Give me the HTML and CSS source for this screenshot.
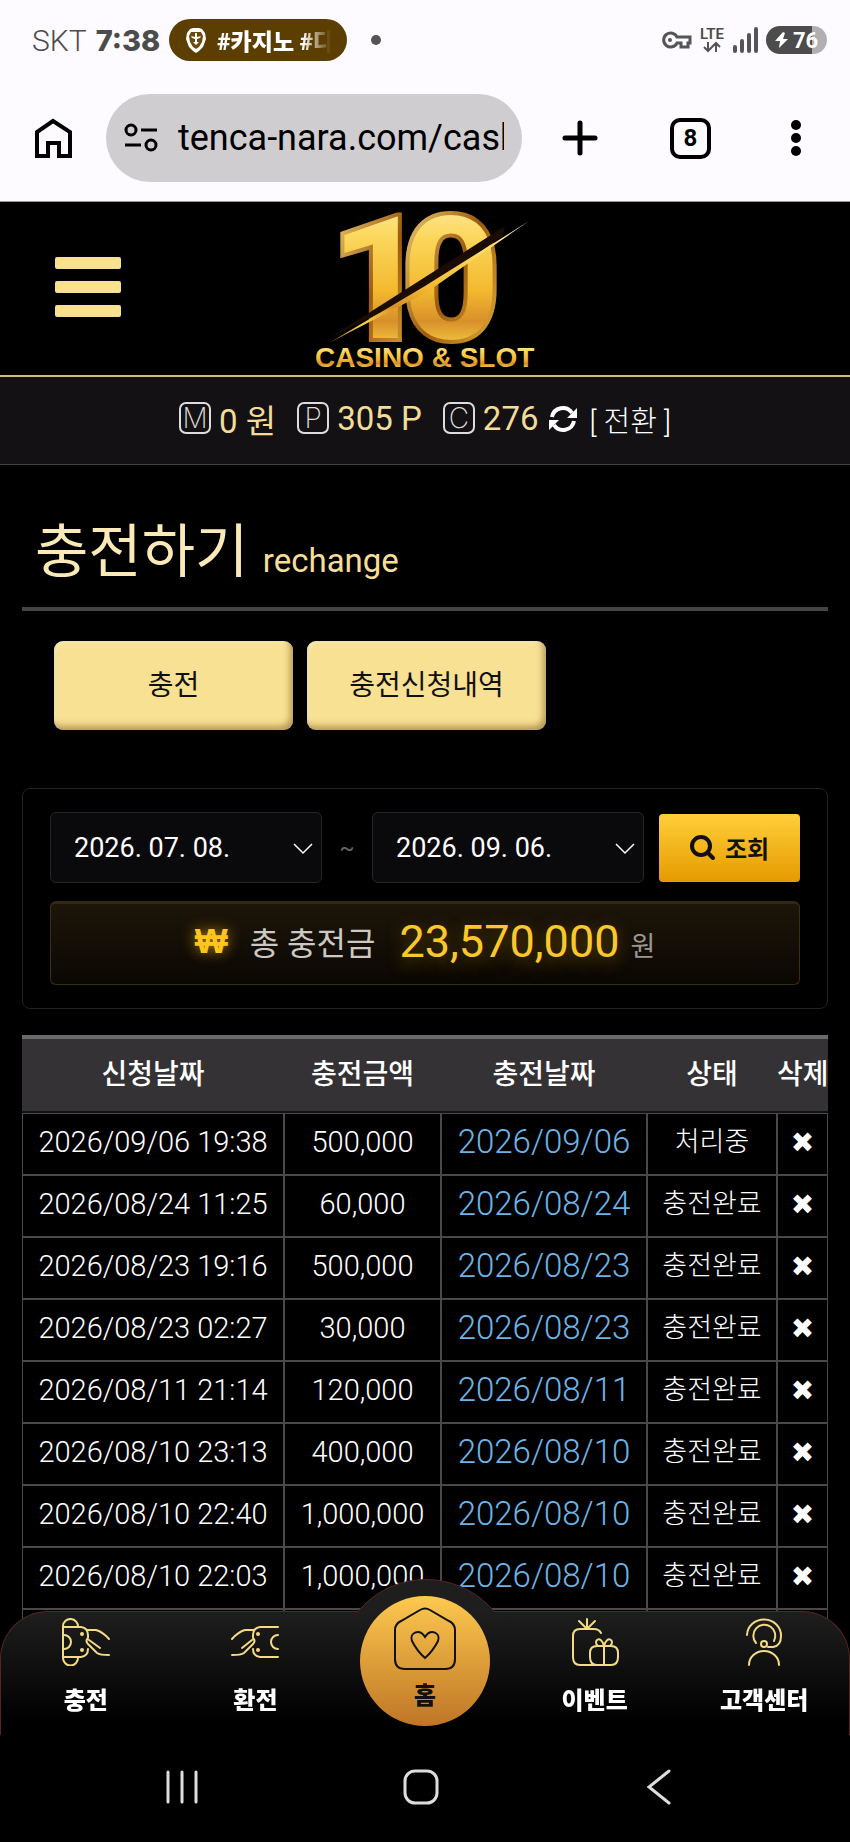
FILE: index.html
```
<!DOCTYPE html>
<html lang="ko">
<head>
    <meta charset="UTF-8">
    <meta name="viewport" content="width=device-width, initial-scale=1.0">
    <title>충전하기</title>
    <link rel="stylesheet" href="styles.css">
</head>
<body>
    <div class="browser">
        <div class="status">
            <span class="carrier">SKT</span>
            <span class="clock">7:38</span>
            <span class="chip">
                <svg width="22" height="26" viewBox="0 0 22 26">
                    <path d="M5 2 8 1h6l3 1 3 4 1 6-3 8-4 4-3 2-3-2-4-4-3-8 1-6z" fill="#fff"/>
                    <path d="M6 5h10l2 4-1 6-3 5-3 2-3-2-3-5-1-6z" fill="#6b4b0c"/>
                    <path d="M6 9l4 1v2l-3-1zM16 9l-4 1v2l3-1zM10 6h2v9h-2zM8 15h6l-3 3z" fill="#fff"/>
                </svg>
                <span class="chip-text">#카지노 #다</span>
            </span>
            <span class="dot"></span>
            <span class="signals">
                <svg width="30" height="18" viewBox="0 0 30 18" fill="none" stroke="#555" stroke-width="3">
                    <path d="M15 6A7 7 0 1 0 15 12H19V16H26V12H28V6Z"/>
                    <circle cx="8" cy="9" r="2" fill="#555" stroke="none"/>
                </svg>
                <span class="lte">LTE
                    <svg width="20" height="12" viewBox="0 0 20 12" fill="none" stroke="#555" stroke-width="2">
                        <path d="M6 1v9M2 6l4 4 4-4M14 11V2M10 6l4-4 4 4"/>
                    </svg>
                </span>
                <svg width="26" height="28" viewBox="0 0 26 28" stroke="#555" stroke-linecap="round">
                    <path d="M3 21v4M10 15v10M17 9v16M24 3v22" stroke-width="4"/>
                </svg>
                <span class="battery">
                    <svg width="13" height="16" viewBox="0 0 13 16"><path d="M8 0 0 9h5l-1 7 9-9H8l2-6z" fill="#fff"/></svg>
                    76
                </span>
            </span>
        </div>
        <div class="toolbar">
            <button class="tool" aria-label="홈">
                <svg width="41" height="42" viewBox="0 0 41 42" fill="none" stroke="#000" stroke-width="4">
                    <path d="M4 39V15L20 4 37 15V39H26V26H15V39Z"/>
                </svg>
            </button>
            <div class="address">
                <svg width="34" height="30" viewBox="0 0 34 30" fill="none" stroke="#000" stroke-width="3">
                    <circle cx="7" cy="7" r="5"/><path d="M17 7h16M1 22h16"/><circle cx="27" cy="22" r="5"/>
                </svg>
                <input type="text" class="url" aria-label="주소" value="tenca-nara.com/cash">
            </div>
            <button class="tool plus" aria-label="새 탭">
                <svg width="40" height="40" viewBox="0 0 40 40" stroke="#000" stroke-width="5" stroke-linecap="round">
                    <path d="M20 5v30M5 20h30"/>
                </svg>
            </button>
            <button class="tool tabs">8</button>
            <button class="tool more" aria-label="더보기">
                <svg width="26" height="38" viewBox="0 0 26 38">
                    <circle cx="13" cy="6" r="5"/><circle cx="13" cy="19" r="5"/><circle cx="13" cy="32" r="5"/>
                </svg>
            </button>
        </div>
    </div>

    <header>
        <button class="menu" aria-label="메뉴"><span></span><span></span><span></span></button>
        <a href="#" class="logo">
            <svg width="220" height="166" viewBox="0 0 220 166">
                <defs>
                    <linearGradient id="gold" x1="0" y1="0" x2="0" y2="1">
                        <stop offset="0" stop-color="#fff6c4"/>
                        <stop offset=".3" stop-color="#fbd65a"/>
                        <stop offset=".55" stop-color="#f3b92f"/>
                        <stop offset=".7" stop-color="#d8902a"/>
                        <stop offset=".85" stop-color="#fbd648"/>
                        <stop offset="1" stop-color="#a3600f"/>
                    </linearGradient>
                    <linearGradient id="edge" x1="0" y1="0" x2="1" y2="1">
                        <stop offset="0" stop-color="#ffe98a"/>
                        <stop offset=".5" stop-color="#9c5a0c"/>
                        <stop offset="1" stop-color="#f5c445"/>
                    </linearGradient>
                </defs>
                <g class="logo-num" fill="url(#gold)" stroke="url(#edge)" stroke-width="4">
                    <text x="13" y="134">1</text>
                    <text x="85" y="134">0</text>
                </g>
                <path d="M16 131 104 75 190 20 188 30 108 86Z" fill="#1a0c00"/>
                <path d="M14 137 110 80 214 15 112 86Z" fill="url(#gold)"/>
                <text class="logo-name" x="0" y="161" fill="url(#gold)">CASINO &amp; SLOT</text>
            </svg>
        </a>
    </header>

    <div class="wallet">
        <span class="coin">M</span><b>0 원</b>
        <span class="coin">P</span><b>305 P</b>
        <span class="coin">C</span><b>276</b>
        <button class="refresh" aria-label="새로고침">
            <svg width="28" height="28" viewBox="0 0 28 28" fill="none" stroke="#fff" stroke-width="4">
                <path d="M3 12A11 11 0 0 1 23 8M25 16A11 11 0 0 1 5 20"/>
                <path d="M28 3v10H18zM0 25V15h10z" fill="#fff" stroke="none"/>
            </svg>
        </button>
        <a href="#" class="change">[ 전환 ]</a>
    </div>

    <main>
        <h1>충전하기 <small>rechange</small></h1>

        <div class="buttons">
            <button>충전</button>
            <button>충전신청내역</button>
        </div>

        <form class="search">
            <div class="dates">
                <label class="date">
                    <select aria-label="시작일"><option>2026. 07. 08.</option></select>
                    <svg width="20" height="12" viewBox="0 0 20 12" fill="none" stroke="#fff" stroke-width="1.5"><path d="M1 1l9 9 9-9"/></svg>
                </label>
                <span class="tilde">~</span>
                <label class="date">
                    <select aria-label="종료일"><option>2026. 09. 06.</option></select>
                    <svg width="20" height="12" viewBox="0 0 20 12" fill="none" stroke="#fff" stroke-width="1.5"><path d="M1 1l9 9 9-9"/></svg>
                </label>
                <button type="button" class="find">
                    <svg width="26" height="26" viewBox="0 0 26 26" fill="none" stroke="#111" stroke-width="4" stroke-linecap="round">
                        <circle cx="11" cy="11" r="9"/><path d="M18 18l5 5"/>
                    </svg>
                    조회
                </button>
            </div>
            <div class="total">
                <span class="won">₩</span>
                <span class="total-name">총 충전금</span>
                <span class="sum">23,570,000</span>
                <span class="unit">원</span>
            </div>
        </form>

        <table>
            <colgroup>
                <col class="c1"><col class="c2"><col class="c3"><col class="c4"><col class="c5">
            </colgroup>
            <thead>
                <tr><th>신청날짜</th><th>충전금액</th><th>충전날짜</th><th>상태</th><th>삭제</th></tr>
            </thead>
            <tbody>
                <tr><td>2026/09/06 19:38</td><td>500,000</td><td class="day">2026/09/06</td><td class="state">처리중</td><td><button class="del">✖</button></td></tr>
                <tr><td>2026/08/24 11:25</td><td>60,000</td><td class="day">2026/08/24</td><td class="state">충전완료</td><td><button class="del">✖</button></td></tr>
                <tr><td>2026/08/23 19:16</td><td>500,000</td><td class="day">2026/08/23</td><td class="state">충전완료</td><td><button class="del">✖</button></td></tr>
                <tr><td>2026/08/23 02:27</td><td>30,000</td><td class="day">2026/08/23</td><td class="state">충전완료</td><td><button class="del">✖</button></td></tr>
                <tr><td>2026/08/11 21:14</td><td>120,000</td><td class="day">2026/08/11</td><td class="state">충전완료</td><td><button class="del">✖</button></td></tr>
                <tr><td>2026/08/10 23:13</td><td>400,000</td><td class="day">2026/08/10</td><td class="state">충전완료</td><td><button class="del">✖</button></td></tr>
                <tr><td>2026/08/10 22:40</td><td>1,000,000</td><td class="day">2026/08/10</td><td class="state">충전완료</td><td><button class="del">✖</button></td></tr>
                <tr><td>2026/08/10 22:03</td><td>1,000,000</td><td class="day">2026/08/10</td><td class="state">충전완료</td><td><button class="del">✖</button></td></tr>
                <tr><td></td><td></td><td></td><td></td><td></td></tr>
            </tbody>
        </table>
    </main>

    <div class="bottom">
        <nav>
            <div class="dome"></div>
            <a href="#">
                <svg width="48" height="48" viewBox="0 0 48 48">
                    <path d="M1 8v32a7 7 0 0 0 15 0v-1M1 8a7 7 0 0 1 15 1M1 9h18q7 1 7 8v2M1 39h18q7-1 7-8M2 17a7 7 0 0 1 0 14"/>
                    <path d="M25 12h9q7 2 13 9M27 22l11 8M26 20q-3 3 0 6l9 9q3 2 12 2"/>
                    <circle cx="20" cy="16" r="1"/><circle cx="20" cy="32" r="1"/>
                </svg>
                충전
            </a>
            <a href="#">
                <svg width="48" height="48" viewBox="0 0 48 48">
                    <path d="M47 9H29q-7 1-7 8v2M47 39H29q-7-1-7-8M47 17a7 7 0 0 0 0 14"/>
                    <path d="M23 12h-9Q7 14 1 21M21 22l-10 8M22 20q3 3 0 6l-9 9q-3 2-12 2"/>
                    <circle cx="27" cy="16" r="1"/><circle cx="27" cy="32" r="1"/>
                </svg>
                환전
            </a>
            <a href="#" class="home">
                <svg width="64" height="64" viewBox="0 0 64 64">
                    <path d="M27 3q5-3 10 0l19 11q6 3 6 9v29q0 10-10 10H12Q2 62 2 52V23q0-6 6-9z"/>
                    <path d="M32 51Q24 44 19 34C16 26 26 21 32 30C38 21 48 26 45 34Q40 44 32 51z"/>
                </svg>
                홈
            </a>
            <a href="#">
                <svg width="48" height="48" viewBox="0 0 48 48">
                    <path d="M30 15q-2-4-7-4H9q-7 0-7 7v21q0 8 7 8h28M16 10V1M15 10 8 3M17 10l7-7"/>
                    <path d="M19 35q0-7 7-7h14q7 0 7 7v4q0 8-7 8H26q-7 0-7-8zM33 28v18M33 28h-6c-6-5 3-12 6 0c3-12 12-5 6 0z"/>
                </svg>
                이벤트
            </a>
            <a href="#">
                <svg width="48" height="48" viewBox="0 0 48 48">
                    <path d="M7 17A17 16 0 0 1 41 18Q41 28 33 29H28M16 25A11 11 0 1 1 34 23"/>
                    <circle cx="24" cy="26" r="3"/>
                    <path d="M9 47a15 14 0 0 1 30 0"/>
                </svg>
                고객센터
            </a>
        </nav>
        <div class="system">
            <button aria-label="최근 앱">
                <svg width="36" height="36" viewBox="0 0 36 36"><path d="M4 3v30M18 3v30M32 3v30"/></svg>
            </button>
            <button aria-label="홈 화면">
                <svg width="36" height="36" viewBox="0 0 36 36"><rect x="2" y="2" width="32" height="32" rx="10"/></svg>
            </button>
            <button aria-label="뒤로">
                <svg width="36" height="36" viewBox="0 0 36 36"><path d="M28 2 8 18l20 16"/></svg>
            </button>
        </div>
    </div>
</body>
</html>
```
FILE: styles.css
```
* {
    box-sizing: border-box;
}

body {
    font-family: Roboto, "Noto Sans CJK KR", sans-serif;
    margin: 0;
    background-color: #000;
    color: #fff;
    min-height: 100vh;
    overflow-x: hidden;
}

button {
    font-family: inherit;
    color: inherit;
    background: none;
    border: none;
    padding: 0;
    cursor: pointer;
}

a {
    color: inherit;
    text-decoration: none;
}

svg {
    display: block;
    flex: none;
}

/* 브라우저 상단 */
.browser {
    background-color: #fdfbff;
    color: #000;
    border-bottom: 1px solid #999;
}

.status {
    display: flex;
    align-items: center;
    height: 80px;
    padding: 0 23px 0 32px;
    color: #4c4c4c;
    font-size: 30px;
}

.carrier {
    font-weight: 300;
}

.clock {
    font-family: Inter, sans-serif;
    font-weight: 800;
    font-size: 29px;
    margin: 0 9px;
}

.chip {
    display: flex;
    align-items: center;
    gap: 10px;
    width: 178px;
    height: 42px;
    padding: 0 16px;
    border-radius: 21px;
    background-color: #5c3f00;
    color: #fff;
}

.chip-text {
    font-size: 23px;
    font-weight: 900;
    white-space: nowrap;
    overflow: hidden;
    -webkit-mask-image: linear-gradient(90deg, #000 75%, transparent);
    mask-image: linear-gradient(90deg, #000 75%, transparent);
}

.dot {
    width: 10px;
    height: 10px;
    margin-left: 24px;
    border-radius: 50%;
    background-color: #555;
}

.signals {
    display: flex;
    align-items: center;
    gap: 8px;
    margin-left: auto;
}

.lte {
    display: flex;
    flex-direction: column;
    align-items: center;
    font-size: 15px;
    font-weight: 600;
    line-height: 14px;
}

.battery {
    display: flex;
    align-items: center;
    justify-content: center;
    gap: 5px;
    width: 61px;
    height: 28px;
    border-radius: 14px;
    background: linear-gradient(90deg, #4c4c4c 76%, #b0b0b0 76%);
    color: #fff;
    font-size: 22px;
    font-weight: 700;
}

.toolbar {
    display: flex;
    align-items: center;
    padding: 14px 41px 19px 33px;
}

.address {
    display: flex;
    align-items: center;
    gap: 20px;
    flex: 1;
    min-width: 0;
    height: 88px;
    margin: 0 38px 0 32px;
    padding: 0 18px;
    border-radius: 44px;
    background-color: #cfcdd0;
}

.url {
    flex: 1;
    min-width: 0;
    padding: 0;
    border: none;
    background: none;
    font-family: inherit;
    font-size: 36px;
    color: #000;
}

.tabs {
    width: 41px;
    height: 41px;
    margin: 0 72px 0 70px;
    border: 4px solid #000;
    border-radius: 10px;
    font-size: 24px;
    font-weight: 700;
}

/* 사이트 상단 */
header {
    display: grid;
    grid-template-columns: 1fr auto 1fr;
    align-items: center;
    height: 175px;
    padding: 0 55px;
    border-bottom: 2px solid #d8b878;
}

.menu {
    display: flex;
    flex-direction: column;
    gap: 12px;
    width: 66px;
    padding-bottom: 4px;
}

.menu span {
    height: 12px;
    border-radius: 2px;
    background-color: #f9e091;
}

.logo svg {
    overflow: visible;
}

.logo-num {
    font-family: Roboto, sans-serif;
    font-weight: 900;
    font-size: 176px;
}

.logo-name {
    font-family: "Liberation Sans", sans-serif;
    font-weight: 700;
    font-size: 28px;
}

.wallet {
    display: flex;
    align-items: center;
    justify-content: center;
    gap: 8px;
    height: 88px;
    padding-bottom: 4px;
    border-bottom: 1px solid #444;
    background-color: #131114;
    white-space: nowrap;
}

.wallet b {
    color: #f3dd96;
    font-size: 33px;
    font-weight: 400;
    margin-right: 13px;
}

.wallet b:nth-of-type(3) {
    margin-right: 3px;
}

.coin {
    width: 32px;
    height: 32px;
    margin-bottom: 2px;
    border: 2px solid #ddd;
    border-radius: 7px;
    color: #ddd;
    font-family: Inter, sans-serif;
    font-weight: 200;
    font-size: 28px;
    line-height: 28px;
    text-align: center;
}

.change {
    margin-left: 4px;
    font-size: 29px;
    font-weight: 300;
}

/* 본문 */
main {
    padding: 0 22px;
}

h1 {
    margin: 0;
    padding: 41px 13px 0;
    border-bottom: 4px solid #444;
    font-size: 58px;
    font-weight: 400;
    line-height: 92px;
    color: #fbeab5;
}

h1 small {
    font-size: 33px;
    color: #f6dd98;
}

.buttons {
    display: flex;
    gap: 14px;
    padding: 30px 32px 58px;
}

.buttons button {
    flex: 0 1 239px;
    height: 89px;
    padding-bottom: 6px;
    border-radius: 9px;
    background-color: #f8e193;
    box-shadow: inset -3px -4px 6px rgba(120, 80, 30, 0.5), inset 2px 2px 4px rgba(255, 255, 255, 0.4);
    color: #111;
    font-size: 28px;
}

.search {
    padding: 23px 27px;
    border: 1px solid #222;
    border-radius: 8px;
}

.dates {
    display: flex;
    align-items: center;
}

.date {
    position: relative;
    flex: 1;
}

.date select {
    display: block;
    width: 100%;
    height: 71px;
    padding: 0 23px;
    border: 1px solid #252527;
    border-radius: 6px;
    background-color: #0a090c;
    color: #fff;
    font-family: inherit;
    font-size: 27px;
    appearance: none;
}

.date svg {
    position: absolute;
    right: 9px;
    top: 31px;
    pointer-events: none;
}

.tilde {
    width: 50px;
    text-align: center;
    color: #666;
    font-size: 22px;
}

.find {
    display: flex;
    align-items: center;
    justify-content: center;
    gap: 9px;
    width: 141px;
    height: 68px;
    margin-left: 15px;
    border-radius: 4px;
    background: linear-gradient(#ffcf3a, #e59a00);
    color: #111;
    font-size: 24px;
    font-weight: 700;
}

.total {
    display: flex;
    align-items: center;
    justify-content: center;
    height: 84px;
    margin-top: 18px;
    padding-bottom: 6px;
    border: 1px solid #3a2f10;
    border-top: 3px solid #33280d;
    border-radius: 6px;
    background: linear-gradient(#1d1509, #0a0703);
}

.won {
    color: #fdc51d;
    font-family: "Liberation Sans", sans-serif;
    font-size: 35px;
    font-weight: 700;
    text-shadow: 0 0 14px #a87c00;
}

.total-name {
    margin: 0 24px 0 22px;
    color: #ccc8c4;
    font-size: 32px;
}

.sum {
    color: #fbc82c;
    font-size: 45px;
    text-shadow: 0 4px 16px #6b5000;
}

.unit {
    margin: 6px 0 0 11px;
    color: #9c978c;
    font-size: 27px;
}

table {
    width: 100%;
    margin-top: 26px;
    table-layout: fixed;
    border-collapse: separate;
    border-spacing: 0;
    text-align: center;
    white-space: nowrap;
}

.c2 { width: 157px; }
.c3 { width: 206px; }
.c4 { width: 130px; }
.c5 { width: 51px; }

th {
    height: 78px;
    padding: 0 0 6px;
    border-top: 4px solid #6b696c;
    border-bottom: 2px solid #111;
    background-color: #343235;
    font-size: 28px;
    font-weight: 500;
}

td {
    height: 62px;
    padding: 0 0 4px;
    border: 1px solid #4a484b;
    font-size: 29px;
    font-weight: 300;
    line-height: 40px;
}

.day {
    color: #6cb4e8;
    font-size: 33px;
}

.state {
    font-size: 27px;
}

.del {
    display: block;
    margin: 2px auto 0;
    font-family: "DejaVu Sans", sans-serif;
    font-size: 28px;
    line-height: 40px;
}

/* 하단 고정 메뉴 */
.bottom {
    position: fixed;
    left: 0;
    right: 0;
    bottom: 0;
}

nav {
    position: relative;
    display: grid;
    grid-template-columns: repeat(5, 1fr);
    height: 124px;
    border: 1px solid #5a2424;
    border-bottom: none;
    border-radius: 48px 48px 0 0;
    background: linear-gradient(#1e1e1e, #000 90%);
}

nav a {
    display: flex;
    flex-direction: column;
    align-items: center;
    gap: 15px;
    padding-top: 6px;
    font-size: 24px;
    font-weight: 900;
}

nav svg {
    fill: none;
    stroke: #f3da84;
    stroke-width: 2;
    stroke-linecap: round;
}

.dome {
    position: absolute;
    left: 50%;
    top: -33px;
    width: 138px;
    height: 34px;
    transform: translateX(-50%);
    overflow: hidden;
}

.dome::before {
    content: "";
    display: block;
    width: 176px;
    height: 176px;
    margin-left: -19px;
    border: 1px solid #5a2424;
    border-radius: 50%;
    background-color: #1e1e1e;
}

nav .home {
    position: relative;
    justify-self: center;
    gap: 5px;
    width: 130px;
    height: 130px;
    margin-top: -16px;
    padding-top: 11px;
    border-radius: 50%;
    background: linear-gradient(#fdc94f, #bf7526);
    color: #111;
    font-size: 24px;
}

.home svg {
    stroke: #111;
}

.system {
    display: flex;
    justify-content: space-between;
    align-items: center;
    height: 107px;
    padding: 0 173px 3px 164px;
    background-color: #000;
}

.system svg {
    fill: none;
    stroke: #ddd;
    stroke-width: 3;
    stroke-linecap: round;
}
```
